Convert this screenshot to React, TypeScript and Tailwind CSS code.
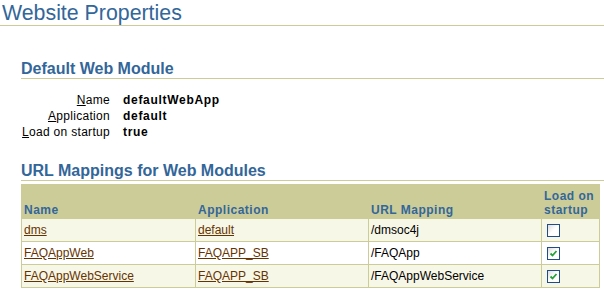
import React from "react";

type Row = { name: string; app: string; url: string; load: boolean };

const rows: Row[] = [
    { name: "dms", app: "default", url: "/dmsoc4j", load: false },
    { name: "FAQAppWeb", app: "FAQAPP_SB", url: "/FAQApp", load: true },
    { name: "FAQAppWebService", app: "FAQAPP_SB", url: "/FAQAppWebService", load: true },
];

function CheckBox({ checked }: { checked: boolean }) {
    return (
        <span className="inline-block w-[13px] h-[13px] border border-[#1f4d85] bg-gradient-to-br from-[#dcdcdc] via-white to-white align-middle">
            {checked && (
                <svg viewBox="0 0 11 11" className="w-[11px] h-[11px] block">
                    <path d="M2.5 5.5 L4.5 7.5 L8.5 3" fill="none" stroke="#22a33a" strokeWidth="1.8" />
                </svg>
            )}
        </span>
    );
}

export default function App() {
    return (
        <main className="bg-white w-[604px] h-[292px] overflow-hidden font-['Liberation_Sans',Arial,sans-serif] text-black">
            {/* page title */}
            <div className="pl-[2px] pt-[2px] pb-[1px] border-b border-[#cccc99] text-[21.33px] leading-[22px] text-[#336699]">
                Website Properties
            </div>

            {/* default web module */}
            <div className="ml-[21px] mt-[34px]">
                <h2 className="pb-[1px] border-b border-[#cccc99] text-[16px] leading-[17px] font-bold text-[#336699]">
                    Default Web Module
                </h2>
                <div className="mt-[13px] grid grid-cols-[89px_auto] gap-x-[13px] text-[12px] leading-[16px]">
                    <span className="text-right tracking-[0.3px]"><u>N</u>ame</span>
                    <span className="font-bold tracking-[0.7px]">defaultWebApp</span>
                    <span className="text-right tracking-[0.3px]"><u>A</u>pplication</span>
                    <span className="font-bold tracking-[0.7px]">default</span>
                    <span className="text-right tracking-[0.3px]"><u>L</u>oad on startup</span>
                    <span className="font-bold tracking-[0.7px]">true</span>
                </div>

                {/* url mappings */}
                <h2 className="mt-[22px] pb-[1px] border-b border-[#cccc99] text-[16px] leading-[17px] font-bold text-[#336699]">
                    URL Mappings for Web Modules
                </h2>
                <table className="mt-[3px] w-[578px] table-fixed border-collapse text-[12px]">
                    <colgroup>
                        <col className="w-[174px]" />
                        <col className="w-[173px]" />
                        <col className="w-[173px]" />
                        <col className="w-[58px]" />
                    </colgroup>
                    <thead>
                        <tr className="h-[34px] bg-[#cccc99] text-[#336699] font-bold tracking-[0.5px] text-left leading-[14px]">
                            <th className="align-bottom pl-[2px] pb-[1px] border border-[#cccc99]">Name</th>
                            <th className="align-bottom pl-[2px] pb-[1px] border border-[#cccc99] border-l-white">Application</th>
                            <th className="align-bottom pl-[2px] pb-[1px] border border-[#cccc99] border-l-white">URL Mapping</th>
                            <th className="align-bottom pl-[2px] pb-[1px] border border-[#cccc99] border-l-white">Load on startup</th>
                        </tr>
                    </thead>
                    <tbody>
                        {rows.map((r, i) => (
                            <tr key={r.name} className={`h-[23px] ${i % 2 === 0 ? "bg-[#f7f7e7]" : "bg-white"}`}>
                                <td className="pl-[2px] border border-[#cccc99]">
                                    <a href="#" className="text-[#663300] underline">{r.name}</a>
                                </td>
                                <td className="pl-[2px] border border-[#cccc99]">
                                    <a href="#" className="text-[#663300] underline">{r.app}</a>
                                </td>
                                <td className="pl-[2px] border border-[#cccc99]">{r.url}</td>
                                <td className="pl-[5px] border border-[#cccc99]">
                                    <CheckBox checked={r.load} />
                                </td>
                            </tr>
                        ))}
                    </tbody>
                </table>
            </div>
        </main>
    );
}
